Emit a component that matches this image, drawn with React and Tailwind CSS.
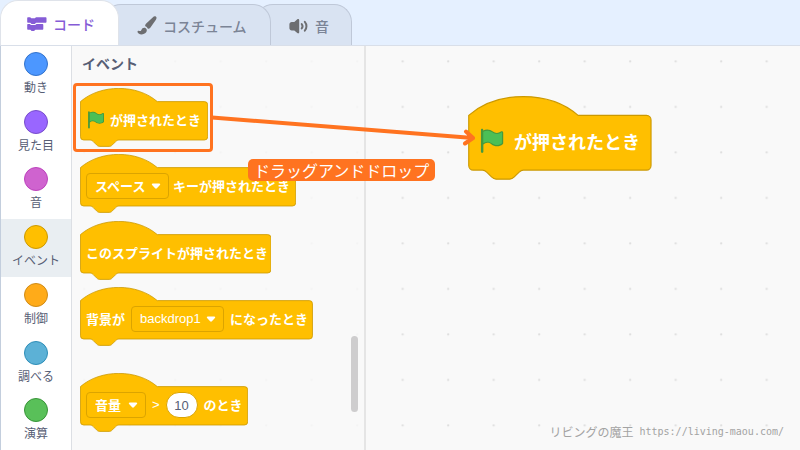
import React from "react";

const HAT_PATH = (w) =>
  `M0,0 c25,-22 71,-22 96,0 H${w - 4} a4,4 0 0 1 4,4 v40 a4,4 0 0 1 -4,4 H48 c-2,0 -3,1 -4,2 l-4,4 c-1,1 -2,2 -4,2 h-12 c-2,0 -3,-1 -4,-2 l-4,-4 c-1,-1 -2,-2 -4,-2 H4 a4,4 0 0 1 -4,-4 z`;

const categories = [
  { name: "動き", color: "bg-[#4c97ff] border-[#3373cc]" },
  { name: "見た目", color: "bg-[#9966ff] border-[#774dcb]" },
  { name: "音", color: "bg-[#cf63cf] border-[#bd42bd]" },
  { name: "イベント", color: "bg-[#ffbf00] border-[#cc9900]", selected: true },
  { name: "制御", color: "bg-[#ffab19] border-[#cf8b17]" },
  { name: "調べる", color: "bg-[#5cb1d6] border-[#2e8eb8]" },
  { name: "演算", color: "bg-[#59c059] border-[#389438]" },
];

function CodeIcon() {
  return (
    <svg className="h-4 w-5 shrink-0" viewBox="0 0 20 16" fill="#855cd6" aria-hidden="true">
      <path d="M1.200 1.200h1.800c.7 0 1 1.100 1.700 1.100h2.800c.7 0 1-1.100 1.700-1.100h9.300c.6 0 1 .4 1 1v3.600c0 .6-.4 1-1 1H9.300c-.7 0-.9 1.100-1.600 1.100H4.700c-.7 0-.9-1.100-1.500-1.100h-2c-.6 0-1-.4-1-1V2.200c0-.6.4-1 1-1z" />
      <path d="M1.200 8h1.500c.7 0 .9 1.100 1.600 1.100h3.600c.7 0 1-1.100 1.700-1.100h5.700c.6 0 1 .4 1 1v3.700c0 .6-.4 1-1 1H8.500c-.7 0-.8 1.200-1.500 1.200H4.700c-.7 0-.8-1.200-1.500-1.200h-2c-.6 0-1-.4-1-1V9c0-.6.4-1 1-1z" />
    </svg>
  );
}

function BrushIcon() {
  return (
    <svg className="size-5 shrink-0" viewBox="0 0 20 20" fill="#6d6e71" aria-hidden="true">
      <path d="M19 .8c-.9-.8-2.200-.4-3.300.6L9.200 7.400c-1 .9-1.200 1.900-1 2.900 1.200.3 2.300 1.300 2.700 2.500 1 .2 1.700-.2 2.400-1.100l5.600-8c.8-1.100.9-2.200.1-2.900z" />
      <path d="M9.700 13.400c-.6-1.700-2.800-2.300-4.200-1.100-1.100.9-.9 2-1.700 2.600-.9.500-1.700-.4-2.700-.1-.9.300-.8 1.600.2 2.400 2.100 1.600 4.900 1.500 6.800.1 1.400-1 2-2.600 1.600-3.900z" />
    </svg>
  );
}

function SoundIcon() {
  return (
    <svg className="size-5 shrink-0" viewBox="0 0 20 20" fill="#6d6e71" aria-hidden="true">
      <path d="M8.300 3.300c.9-.7 1.900-.3 1.900.8v12.200c0 1.100-1 1.500-1.900.8l-3-2.700H2.700C1.400 14.400.4 13.400.4 12.200V8.300C.4 7 1.400 6 2.700 6h2.600z" />
      <path
        d="M12.700 8c1 1.300 1 3.200 0 4.500M15.800 5.800c2.200 2.500 2.200 6.400 0 8.900"
        fill="none"
        stroke="#6d6e71"
        strokeWidth="2"
        strokeLinecap="round"
      />
    </svg>
  );
}

function Flag({ className }) {
  return (
    <svg className={className} viewBox="0 0 24 24" role="img" aria-label="緑の旗">
      <path
        fill="#45993d"
        d="M20.8 3.700c-.4-.2-.9-.1-1.200.2-2 1.600-4.800 1.600-6.800 0-2.300-1.900-5.600-2.300-8.300-1v-.4c0-.6-.5-1-1-1s-1 .4-1 1v18.800c0 .5.5 1 1 1h.1c.5 0 1-.5 1-1v-6.400c1-.7 2.100-1.200 3.400-1.300 1.200 0 2.400.4 3.400 1.200 2.900 2.300 7 2.300 9.800 0 .3-.2.4-.5.4-.9V4.700c0-.5-.3-.9-.8-1z"
      />
      <path
        fill="#4cbf56"
        d="M20.600 4.800l-.1 9.100v.1c-2.500 2-6.100 2-8.600 0-1.100-.9-2.500-1.400-4-1.400-1.200.1-2.300.5-3.400 1.100V4c2.500-1.400 5.500-1.100 7.700.6 2.400 1.900 5.700 1.900 8.100 0h.2c0 .1.100.1.100.2z"
      />
    </svg>
  );
}

function HatBlock({ units, className = "", children }) {
  const width = Math.round(units * 0.8) + 1;
  return (
    <div className={`grid w-fit ${className}`}>
      <svg
        className="col-start-1 row-start-1"
        width={width}
        height="60"
        viewBox={`-0.6 -17 ${width / 0.8} 75`}
        aria-hidden="true"
      >
        <path d={HAT_PATH(units)} fill="#ffbf00" stroke="#cc9900" />
      </svg>
      <div className="col-start-1 row-start-1 mt-3 flex h-10 items-center whitespace-nowrap px-1.5 text-[13px] font-bold text-white">
        {children}
      </div>
    </div>
  );
}

function BlockSelect({ label, value, className }) {
  return (
    <span className="grid items-center">
      <select
        aria-label={label}
        className={`col-start-1 row-start-1 h-[26px] appearance-none rounded-[4px] border border-[#dba400] bg-transparent pl-2 text-[13px] text-white outline-none ${className}`}
      >
        <option>{value}</option>
      </select>
      <svg
        className="pointer-events-none col-start-1 row-start-1 mr-2 h-2 w-[10px] justify-self-end"
        viewBox="0 0 10 8"
        aria-hidden="true"
      >
        <path d="M1.800 1.500h6.400c1 0 1.300.8.700 1.500L5.900 6.300c-.5.500-1.300.5-1.800 0L1.100 3c-.6-.7-.3-1.500.7-1.500z" fill="#fff" />
      </svg>
    </span>
  );
}

function Tabs() {
  return (
    <div role="tablist" className="flex h-[46px] items-end border-b border-[#d9dfe9]">
      <button
        role="tab"
        aria-selected="true"
        className="z-30 flex h-[45px] w-[119px] items-center gap-1.5 rounded-t-[18px] border border-b-0 border-[#dfe3ea] bg-white pl-[26px] pt-0.5 text-[14px] font-medium text-[#855cd6]"
      >
        <CodeIcon />
        コード
      </button>
      <button
        role="tab"
        aria-selected="false"
        className="z-20 -ml-4 flex h-[41px] w-[168px] items-center gap-1.5 rounded-t-[18px] border border-b-0 border-[#bfc8d8] bg-[#d9e3f2] pl-[33px] pt-0.5 text-[14px] font-medium text-[#7b8496]"
      >
        <BrushIcon />
        コスチューム
      </button>
      <button
        role="tab"
        aria-selected="false"
        className="z-10 -ml-4 flex h-[41px] w-[97px] items-center gap-1.5 rounded-t-[18px] border border-b-0 border-[#bfc8d8] bg-[#d9e3f2] pl-[33px] pt-0.5 text-[14px] font-medium text-[#7b8496]"
      >
        <SoundIcon />
        音
      </button>
    </div>
  );
}

function Sidebar() {
  return (
    <nav className="flex w-[72px] shrink-0 flex-col border-l border-r border-l-[#c3cedd] border-r-[#dcdfe4] bg-white">
      {categories.map((c) => (
        <button
          key={c.name}
          className={`flex flex-1 flex-col items-center gap-[3px] pt-1.5 text-[12px] leading-4 text-[#575e75] ${
            c.selected ? "bg-[#e9eef2]" : ""
          }`}
        >
          <span className={`size-6 rounded-full border ${c.color}`} />
          {c.name}
        </button>
      ))}
    </nav>
  );
}

function Palette() {
  return (
    <section className="flex w-[294px] shrink-0 justify-between border-r-2 border-[#e5e5e5] bg-[#f9f9f9]/80 pl-2 pr-1.5">
      <div>
        <h2 className="h-[42px] pl-0.5 pt-[7px] text-[14px] font-bold leading-5 text-[#575e75]">イベント</h2>
        <HatBlock units={159}>
          <Flag className="size-5" />
          <span className="pl-1">が押されたとき</span>
        </HatBlock>
        <HatBlock units={269} className="mt-1.5">
          <BlockSelect label="キー" value="スペース" className="w-[83px]" />
          <span className="pl-1">キーが押されたとき</span>
        </HatBlock>
        <HatBlock units={238} className="mt-[7px]">
          このスプライトが押されたとき
        </HatBlock>
        <HatBlock units={290} className="mt-1.5">
          背景が
          <span className="pl-1.5">
            <BlockSelect
              label="背景"
              value="backdrop1"
              className="w-[93px] font-['Liberation_Sans',sans-serif] font-normal"
            />
          </span>
          <span className="pl-1.5">になったとき</span>
        </HatBlock>
        <HatBlock units={209} className="mt-[26px]">
          <BlockSelect label="種類" value="音量" className="w-[60px]" />
          <span className="px-1.5 font-['Liberation_Sans',sans-serif] font-normal">&gt;</span>
          <input
            aria-label="音量"
            defaultValue="10"
            className="h-[26px] w-8 rounded-full border border-[#dba400] bg-white text-center font-['Liberation_Sans',sans-serif] text-[13px] font-normal text-[#575e75] outline-none"
          />
          <span className="pl-1.5">のとき</span>
        </HatBlock>
      </div>
      <div className="mt-[290px] h-[76px] w-[7px] rounded-full bg-[#cecdce]" />
    </section>
  );
}

function Workspace() {
  return (
    <main className="relative flex-1">
      <div className="absolute left-[102px] top-[50px] grid">
        <svg className="col-start-1 row-start-1" width="184" height="85" viewBox="-0.6 -17 161.400 74.600" aria-hidden="true">
          <path d={HAT_PATH(160)} fill="#ffbf00" stroke="#cc9900" />
        </svg>
        <div className="col-start-1 row-start-1 mt-[18px] flex h-[54px] items-center gap-2 whitespace-nowrap pl-[10px] text-[18px] font-bold text-white">
          <Flag className="size-7" />
          が押されたとき
        </div>
      </div>
    </main>
  );
}

function Annotations() {
  return (
    <div className="pointer-events-none absolute left-0 top-0 z-40">
      <div className="absolute left-[73px] top-[83px] h-[69px] w-[140px] rounded-[4px] border-3 border-[#ff7320]" />
      <svg className="absolute left-[210px] top-[110px]" width="270" height="40" viewBox="0 0 270 40" aria-hidden="true">
        <path d="M2 7.500L263 28M256 21.500l7 6.500-8 5.500" fill="none" stroke="#ff7320" strokeWidth="4" strokeLinejoin="round" strokeLinecap="round" />
      </svg>
      <p className="absolute left-[248px] top-[159px] whitespace-nowrap rounded-[5px] bg-[#ff7320] px-1.5 text-[16px] font-normal leading-[22px] text-white">
        ドラッグアンドドロップ
      </p>
    </div>
  );
}

export default function App() {
  return (
    <div className="relative flex min-h-screen flex-col bg-[#e5f0ff] font-['Noto_Sans_CJK_JP',sans-serif]">
      <Tabs />
      <div className="relative grid flex-1 bg-[#f9f9f9]">
        <svg className="absolute h-full w-full" aria-hidden="true">
          <defs>
            <pattern id="dots" x="15.700" y="-7.600" width="45.500" height="45.500" patternUnits="userSpaceOnUse">
              <rect x="22" y="22" width="2" height="2" rx="0.500" fill="#dddddd" />
            </pattern>
          </defs>
          <rect width="100%" height="100%" fill="url(#dots)" />
        </svg>
        <div className="relative flex">
          <Sidebar />
          <Palette />
          <Workspace />
        </div>
      </div>
      <footer className="absolute bottom-2 right-4 flex items-center gap-1.5 text-[12px] leading-5 text-[#a3a3a3]">
        リビングの魔王
        <a href="https://living-maou.com/" className="font-['DejaVu_Sans_Mono',monospace] text-[10px]">
          https://living-maou.com/
        </a>
      </footer>
      <Annotations />
    </div>
  );
}
